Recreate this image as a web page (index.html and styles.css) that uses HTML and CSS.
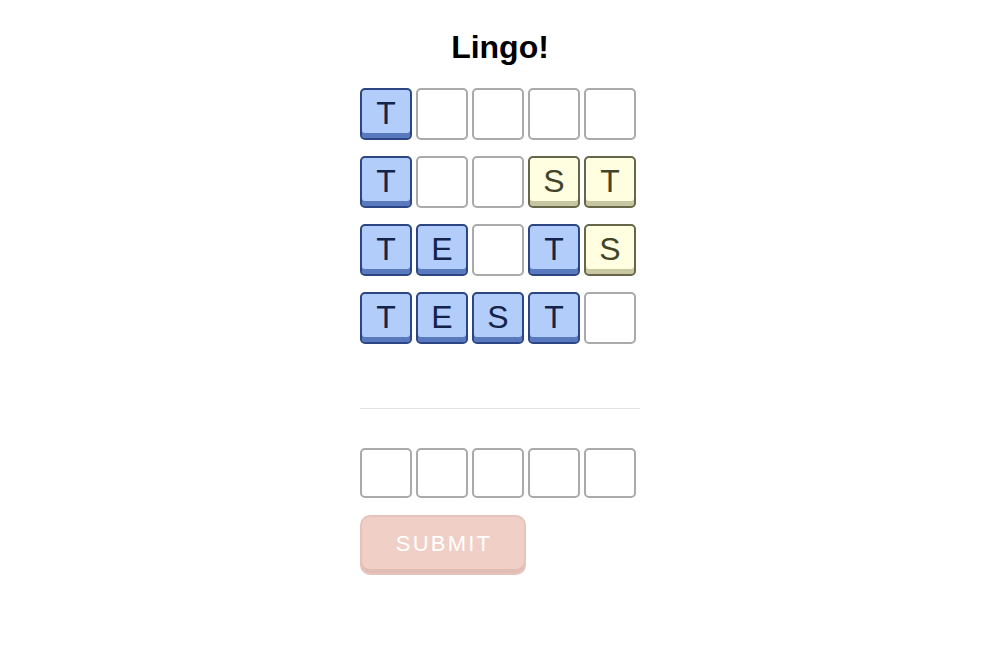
FILE: index.html
```html
<!DOCTYPE html>
<html lang="en">
<head>
<meta charset="utf-8">
<title>Lingo!</title>
<link rel="stylesheet" href="styles.css">
</head>
<body>
<main class="app">
  <h1 class="title">Lingo!</h1>
  <div class="board">
    <div class="row">
      <div class="tile correct">T</div>
      <div class="tile"></div>
      <div class="tile"></div>
      <div class="tile"></div>
      <div class="tile"></div>
    </div>
    <div class="row">
      <div class="tile correct">T</div>
      <div class="tile"></div>
      <div class="tile"></div>
      <div class="tile present">S</div>
      <div class="tile present">T</div>
    </div>
    <div class="row">
      <div class="tile correct">T</div>
      <div class="tile correct">E</div>
      <div class="tile"></div>
      <div class="tile correct">T</div>
      <div class="tile present">S</div>
    </div>
    <div class="row">
      <div class="tile correct">T</div>
      <div class="tile correct">E</div>
      <div class="tile correct">S</div>
      <div class="tile correct">T</div>
      <div class="tile"></div>
    </div>
  </div>
  <hr class="divider">
  <form class="guess">
    <div class="row inputs">
      <input class="cell" maxlength="1">
      <input class="cell" maxlength="1">
      <input class="cell" maxlength="1">
      <input class="cell" maxlength="1">
      <input class="cell" maxlength="1">
    </div>
    <button class="submit" type="button" disabled>SUBMIT</button>
  </form>
</main>
</body>
</html>
```
FILE: styles.css
```css
html, body {
  margin: 0;
  padding: 0;
  background: #ffffff;
}

body {
  font-family: "Liberation Sans", Arial, sans-serif;
  color: #000;
}

.app {
  width: 280px;
  margin: 0 auto;
  padding-top: 29px;
  display: flex;
  flex-direction: column;
}

.title {
  margin: 0 0 22px;
  font-size: 32px;
  line-height: 37px;
  font-weight: bold;
  text-align: center;
}

.board {
  display: flex;
  flex-direction: column;
  gap: 16px;
}

.row {
  display: flex;
  gap: 4px;
}

.tile {
  box-sizing: border-box;
  width: 52px;
  height: 52px;
  border: 2px solid #aaaaaa;
  border-radius: 5px;
  background: #fff;
  display: flex;
  align-items: center;
  justify-content: center;
  font-size: 32px;
  line-height: 1;
  padding-bottom: 2px;
}

.tile.correct {
  background: #b2cdfa;
  border-color: #2c4684;
  color: #14234a;
  box-shadow: inset 0 -5px 0 #5a7ac0;
}

.tile.present {
  background: #fffee0;
  border-color: #66664a;
  color: #44442a;
  box-shadow: inset 0 -5px 0 #c9c6a2;
}

.divider {
  margin: 64px 0 0;
  border: 0;
  border-top: 1px solid #e2e2e2;
  height: 0;
}

.guess {
  margin: 39px 0 0;
  display: flex;
  flex-direction: column;
  align-items: flex-start;
  gap: 17px;
}

.cell {
  box-sizing: border-box;
  width: 52px;
  height: 50px;
  margin: 0;
  border: 2px solid #aaaaaa;
  border-radius: 5px;
  background: #fff;
  font-family: inherit;
  font-size: 32px;
  text-align: center;
  padding: 0;
}

.submit {
  box-sizing: border-box;
  width: 166px;
  height: 60px;
  margin: 0;
  padding: 0 0 3px 2px;
  border: 2px solid #e6c4bc;
  border-radius: 10px;
  background: #f0cfc7;
  box-shadow: inset 0 -4px 0 #e2bdb5;
  color: #ffffff;
  font-family: inherit;
  font-size: 22px;
  letter-spacing: 2.2px;
}
```
